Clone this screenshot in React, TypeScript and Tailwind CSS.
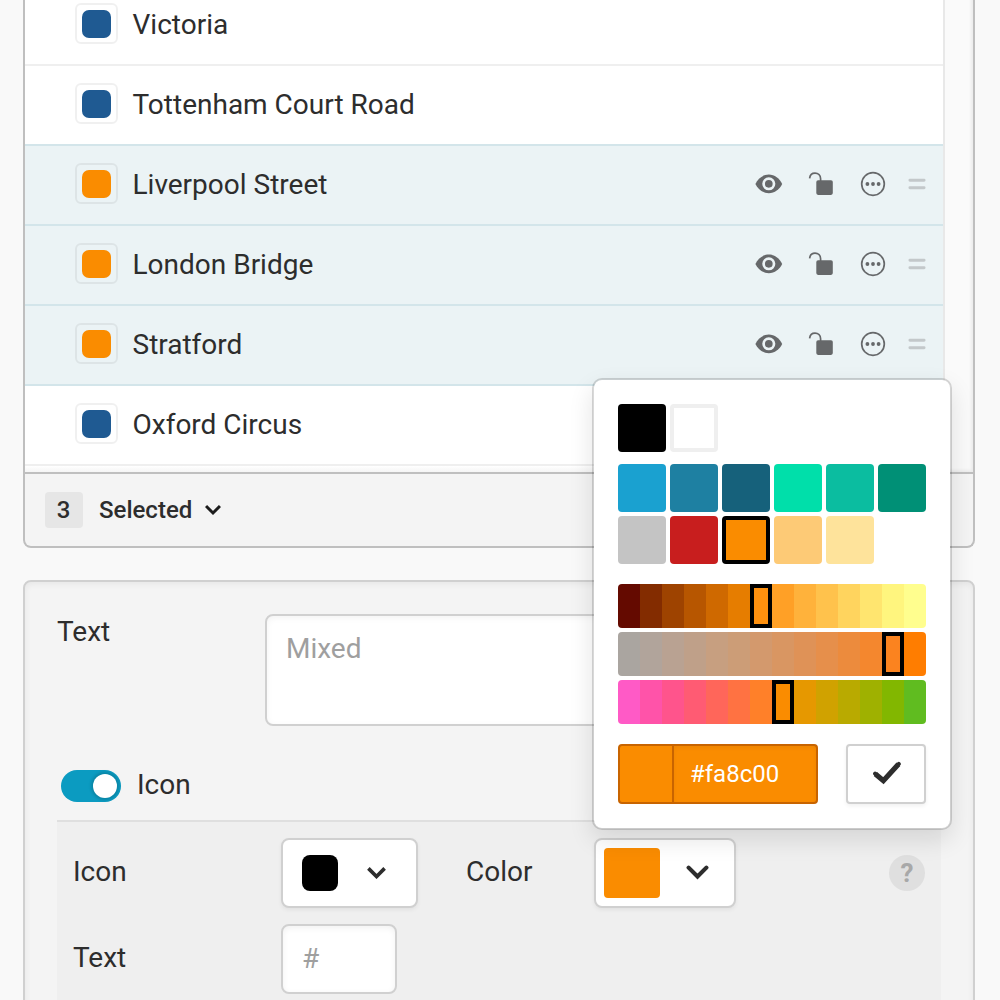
import React from "react";
import clsx from "clsx";

interface Station {
  name: string;
  selected: boolean;
  lineClass: string;
}

const stations: Station[] = [
  { name: "Victoria", selected: false, lineClass: "border-[#efefef]" },
  { name: "Tottenham Court Road", selected: false, lineClass: "border-[#d3e5ea]" },
  { name: "Liverpool Street", selected: true, lineClass: "border-[#d3e5ea]" },
  { name: "London Bridge", selected: true, lineClass: "border-[#d3e5ea]" },
  { name: "Stratford", selected: true, lineClass: "border-[#d3e5ea]" },
  { name: "Oxford Circus", selected: false, lineClass: "border-[#efefef]" },
];

const swatchRows = [
  ["#1aa1d0", "#1e80a2", "#16617b", "#00dfaa", "#0bbda0", "#009076"],
  ["#c4c4c4", "#c81e1e", "#fa8c00", "#fdca76", "#fee39b"],
];

const ranges = [
  {
    id: "lightness",
    active: 6,
    colors: [
      "#640a00", "#832c00", "#9e4300", "#b75600", "#cf6900", "#e67d00", "#ff910f",
      "#ffa026", "#ffb23b", "#ffc24c", "#ffd45e", "#ffe56f", "#fff57e", "#fffe8e",
    ],
  },
  {
    id: "saturation",
    active: 12,
    colors: [
      "#aaa5a0", "#b1a49b", "#b9a292", "#bfa089", "#c79f80", "#cc9d77", "#d3996d",
      "#d99662", "#df9257", "#e68f4b", "#ec8b3d", "#f4872e", "#fb831f", "#ff7d00",
    ],
  },
  {
    id: "hue",
    active: 7,
    colors: [
      "#ff5ac6", "#ff53a9", "#ff548c", "#ff5b73", "#ff665a", "#ff7242", "#ff8029",
      "#fa8c00", "#e69800", "#d0a200", "#b9aa00", "#9fb100", "#82b700", "#60bc20",
    ],
  },
];

const EyeIcon = () => (
  <svg width="28" height="20" viewBox="0 0 28 20" fill="none">
    <path
      d="M.4 10C3 4.600 8 .6 13.800.6S24.600 4.600 27.200 10C24.600 15.400 19.600 19.200 13.800 19.200S3 15.400.4 10Z"
      fill="#66686a"
    />
    <circle cx="13.800" cy="9.800" r="5.200" stroke="#ebf3f5" strokeWidth="2.700" />
  </svg>
);

const UnlockIcon = () => (
  <svg width="26" height="24" viewBox="0 0 26 24" fill="none">
    <path d="M1.600 6.400C2 3 4.200 1.200 7 1.200c3.200 0 5.600 2.200 5.600 5.600V9" stroke="#66686a" strokeWidth="1.700" />
    <rect x="8.300" y="8.300" width="16.500" height="14.600" rx="1.800" fill="#66686a" />
  </svg>
);

const MoreIcon = () => (
  <svg width="26" height="26" viewBox="0 0 26 26" fill="#66686a">
    <circle cx="13" cy="13" r="11.300" fill="none" stroke="#66686a" strokeWidth="1.700" />
    <circle cx="7.400" cy="13" r="1.900" />
    <circle cx="13" cy="13" r="1.900" />
    <circle cx="18.600" cy="13" r="1.900" />
  </svg>
);

const DragIcon = () => (
  <svg width="18" height="12" viewBox="0 0 18 12" stroke="#c3c8ca" strokeWidth="2.900" strokeLinecap="round">
    <path d="M1.900 2.300h14.200M1.900 9.700h14.200" />
  </svg>
);

const Chevron = ({ width, stroke, color = "#2d2d2d", cap = "butt" }: {
  width: number;
  stroke: number;
  color?: string;
  cap?: "butt" | "round";
}) => (
  <svg width={width} height={(width * 14) / 22} viewBox="0 0 22 14" fill="none">
    <path d="M2.500 2.500 11 11l8.500-8.500" stroke={color} strokeWidth={stroke} strokeLinecap={cap} />
  </svg>
);

const StationRow = ({ station }: { station: Station }) => (
  <div
    className={clsx(
      "h-20 border-b-2 pl-[50px] pr-[17px] flex items-center",
      station.lineClass,
      station.selected ? "bg-[#ebf3f5]" : "bg-white"
    )}
  >
    <div className="w-[43px] h-[41px] -mt-[3px] border-2 border-black/6 rounded-md flex items-center justify-center shrink-0">
      <div
        className={clsx(
          "w-[29px] h-[28px] rounded-[7px]",
          station.selected ? "bg-[#fa8c00]" : "bg-[#1f5a92]"
        )}
      />
    </div>
    <span className="ml-[14.5px] -mt-px grow text-[28px] leading-8">{station.name}</span>
    {station.selected && (
      <div className="flex items-center -mt-[2px]">
        <EyeIcon />
        <div className="ml-[25px]">
          <UnlockIcon />
        </div>
        <div className="ml-[26px]">
          <MoreIcon />
        </div>
        <div className="ml-[22px]">
          <DragIcon />
        </div>
      </div>
    )}
  </div>
);

const ColorPicker = () => (
  <div className="absolute left-[592px] top-[378px] w-[360px] rounded-[10px] border-2 border-black/15 bg-white bg-clip-padding p-6 shadow-[0_10px_24px_rgba(0,0,0,0.11)]">
    <div className="flex gap-1">
      <button type="button" className="size-12 rounded-[4px] bg-black" />
      <button type="button" className="size-12 rounded-[4px] bg-white border-4 border-[#efefef]" />
    </div>
    <div className="mt-3 flex flex-col gap-1">
      {swatchRows.map((row, i) => (
        <div key={i} className="flex gap-1">
          {row.map((color) => (
            <button
              type="button"
              key={color}
              className={clsx("size-12 rounded-[4px]", color === "#fa8c00" && "border-4 border-black")}
              style={{ backgroundColor: color }}
            />
          ))}
        </div>
      ))}
    </div>
    <div className="mt-5 flex flex-col gap-1">
      {ranges.map((range) => (
        <div key={range.id} className="flex h-11 overflow-hidden rounded-[4px]">
          {range.colors.map((color, i) => (
            <div
              key={color}
              className={clsx("w-[22px]", i === range.active && "border-4 border-black")}
              style={{ backgroundColor: color }}
            />
          ))}
        </div>
      ))}
    </div>
    <div className="mt-5 flex justify-between">
      <div className="flex w-[200px] h-[60px] rounded-[4px] border-2 border-[#c86400] bg-[#fa8c00] text-white">
        <div className="w-[54px] border-r-2 border-[#c86400]" />
        <div className="grow pl-4 pt-3 text-2xl leading-8 shadow-[inset_0_2px_4px_rgba(0,0,0,0.05)]">#fa8c00</div>
      </div>
      <button
        type="button"
        className="w-20 h-[60px] rounded-[4px] border-2 border-[#d0d0d0] bg-white flex items-center justify-center shadow-[0_2px_4px_rgba(0,0,0,0.06)]"
      >
        <svg className="ml-px -mt-[2px]" width="30" height="24" viewBox="0 0 30 24" fill="none">
          <path d="m3.400 12.900 8 6.800L26.400 3.200" stroke="#2d2d2d" strokeWidth="5.200" />
          <path d="m3.100 12.600 1 .9M26.800 2.900l-1 1" stroke="#2d2d2d" strokeWidth="4" strokeLinecap="round" />
        </svg>
      </button>
    </div>
  </div>
);

const App: React.FC = () => {
  return (
    <div className="relative w-[1000px] h-[1000px] overflow-hidden bg-[#f9f9f9] pl-[23px] pr-[25px] font-['Roboto',sans-serif] text-[#2d2d2d]">
      <div className="-mt-[14px] h-[562px] rounded-b-lg border-2 border-t-0 border-[#bfbfbf] bg-[#f4f4f4] overflow-hidden">
        <div className="flex h-[488px] border-b-2 border-[#bfbfbf] bg-[#fafafa] shadow-[inset_-2px_-2px_3px_rgba(0,0,0,0.06)]">
          <div className="w-[920px] border-r-2 border-[#e8e8e8]">
            {stations.map((station) => (
              <StationRow key={station.name} station={station} />
            ))}
            <div className="h-[6px] bg-linear-to-b from-white to-[#f5f5f5]" />
          </div>
        </div>
        <div className="flex h-[72px] items-center pl-5 text-2xl font-medium leading-8">
          <span className="flex w-[38px] h-9 items-center justify-center rounded-[4px] bg-[#e6e6e6] pr-px">3</span>
          <span className="ml-4">Selected</span>
          <span className="ml-3">
            <Chevron width={18} stroke={3.6} color="#1c1c1c" />
          </span>
        </div>
      </div>

      <div className="mt-8 h-[460px] rounded-t-lg border-2 border-[#d0d0d0] bg-[#f4f4f4] pl-8 pr-8 text-[28px] leading-8 shadow-[inset_0_2px_6px_rgba(0,0,0,0.06)]">
        <div className="flex pt-8">
          <label className="w-[208px] pt-[2px]">Text</label>
          <textarea
            className="block grow h-[112px] resize-none rounded-lg border-2 border-[#d0d0d0] bg-white px-[19px] pt-[17px] shadow-[inset_0_2px_6px_rgba(0,0,0,0.05)] placeholder:text-[#9f9f9f]"
            placeholder="Mixed"
          />
        </div>
        <div className="mt-11 ml-1 flex h-8 items-center">
          <div className="flex w-[60px] h-8 items-center justify-end rounded-full bg-[#0b9bc1] pr-1">
            <div className="size-6 rounded-full bg-white shadow-[0_0_3px_2px_rgba(0,0,0,0.15)]" />
          </div>
          <span className="ml-4 -mt-[2px]">Icon</span>
        </div>
        <div className="mt-[18px] h-[200px] w-[884px] border-t-2 border-[#dfdfdf] bg-[#efefef] pl-4 pr-4 pt-4">
          <div className="flex h-[70px] items-center">
            <span className="w-[208px] -mt-[2px]">Icon</span>
            <button
              type="button"
              className="flex w-[137px] h-[70px] items-center rounded-lg border-2 border-[#d0d0d0] bg-white pl-[19px] shadow-[0_2px_4px_rgba(0,0,0,0.06)]"
            >
              <span className="size-9 rounded-[8px] bg-black" />
              <span className="ml-7 -mt-px">
                <Chevron width={21} stroke={3.8} />
              </span>
            </button>
            <span className="ml-12 w-[128px] -mt-[2px]">Color</span>
            <button
              type="button"
              className="flex w-[142px] h-[70px] items-center rounded-lg border-2 border-[#d0d0d0] bg-white pl-2 shadow-[0_2px_4px_rgba(0,0,0,0.06)]"
            >
              <span className="w-14 h-[50px] rounded-[4px] bg-[#fa8c00]" />
              <span className="ml-[26px] -mt-px">
                <Chevron width={23} stroke={4} cap="round" />
              </span>
            </button>
            <span className="ml-auto flex size-9 items-center justify-center rounded-full bg-[#dfdfdf] text-[26px] font-bold text-[#a8a8a8]">
              ?
            </span>
          </div>
          <div className="mt-4 flex h-[70px] items-center">
            <label className="w-[208px] -mt-[2px]">Text</label>
            <input
              className="w-[116px] h-[70px] rounded-lg border-2 border-[#d0d0d0] bg-white px-[19px] pb-[2px] shadow-[inset_0_2px_6px_rgba(0,0,0,0.06)] placeholder:text-[#9f9f9f]"
              placeholder="#"
            />
          </div>
        </div>
      </div>

      <ColorPicker />
    </div>
  );
};

export default App;
